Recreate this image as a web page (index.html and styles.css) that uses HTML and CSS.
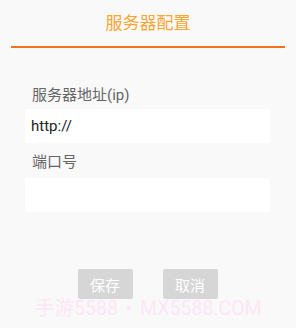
FILE: index.html
```html
<!DOCTYPE html>
<html lang="zh">
<head>
    <meta charset="UTF-8">
    <meta name="viewport" content="width=device-width, initial-scale=1.0">
    <title>服务器配置</title>
    <link rel="stylesheet" href="styles.css">
</head>
<body>
    <div class="header">
        <h1>服务器配置</h1>
    </div>

    <div class="form">
        <div class="label first">服务器地址(ip)</div>
        <input class="field" type="text" value="http://">
        <div class="label">端口号</div>
        <input class="field" type="text" value="">
    </div>

    <div class="buttons">
        <button>保存</button>
        <button>取消</button>
    </div>

    <div class="watermark">手游5588 • MX5588.COM</div>
</body>
</html>
```

FILE: styles.css
```css
body {
    margin: 0;
    height: 328px;
    background-color: #f9f9f9;
    font-family: Roboto, "Noto Sans CJK SC", sans-serif;
    position: relative;
    overflow: hidden;
}
.header {
    margin: 0 11px;
    padding-top: 13px;
    height: 48px;
    box-sizing: border-box;
    border-bottom: 2px solid #f5701f;
}
.header h1 {
    margin: 0;
    font-size: 17px;
    line-height: 20px;
    font-weight: normal;
    text-align: center;
    color: #f9a534;
}
.form {
    padding: 0 26px 0 25px;
}
.label {
    padding-left: 7px;
    font-size: 15px;
    line-height: 20px;
    color: #666;
    margin: 9px 0 6px;
}
.label.first {
    margin-top: 37px;
    margin-bottom: 4px;
}
.field {
    display: block;
    width: 100%;
    height: 34px;
    box-sizing: border-box;
    border: none;
    border-radius: 2px;
    background: #fff;
    padding: 0 6px;
    font-family: Roboto, "Noto Sans CJK SC", sans-serif;
    font-size: 15px;
    color: #222;
    outline: none;
}
.buttons {
    display: flex;
    justify-content: center;
    gap: 30px;
    margin-top: 57px;
    padding-right: 1px;
}
.buttons button {
    width: 55px;
    height: 30px;
    border: none;
    border-radius: 2px;
    background: #d6d6d6;
    color: #fff;
    font-family: "Noto Sans CJK SC", sans-serif;
    font-size: 15px;
    padding: 0;
}
.watermark {
    position: absolute;
    left: 35px;
    top: 299px;
    font-size: 19.5px;
    line-height: 20px;
    word-spacing: 3px;
    color: #fde6f5;
    white-space: nowrap;
    pointer-events: none;
}
```
